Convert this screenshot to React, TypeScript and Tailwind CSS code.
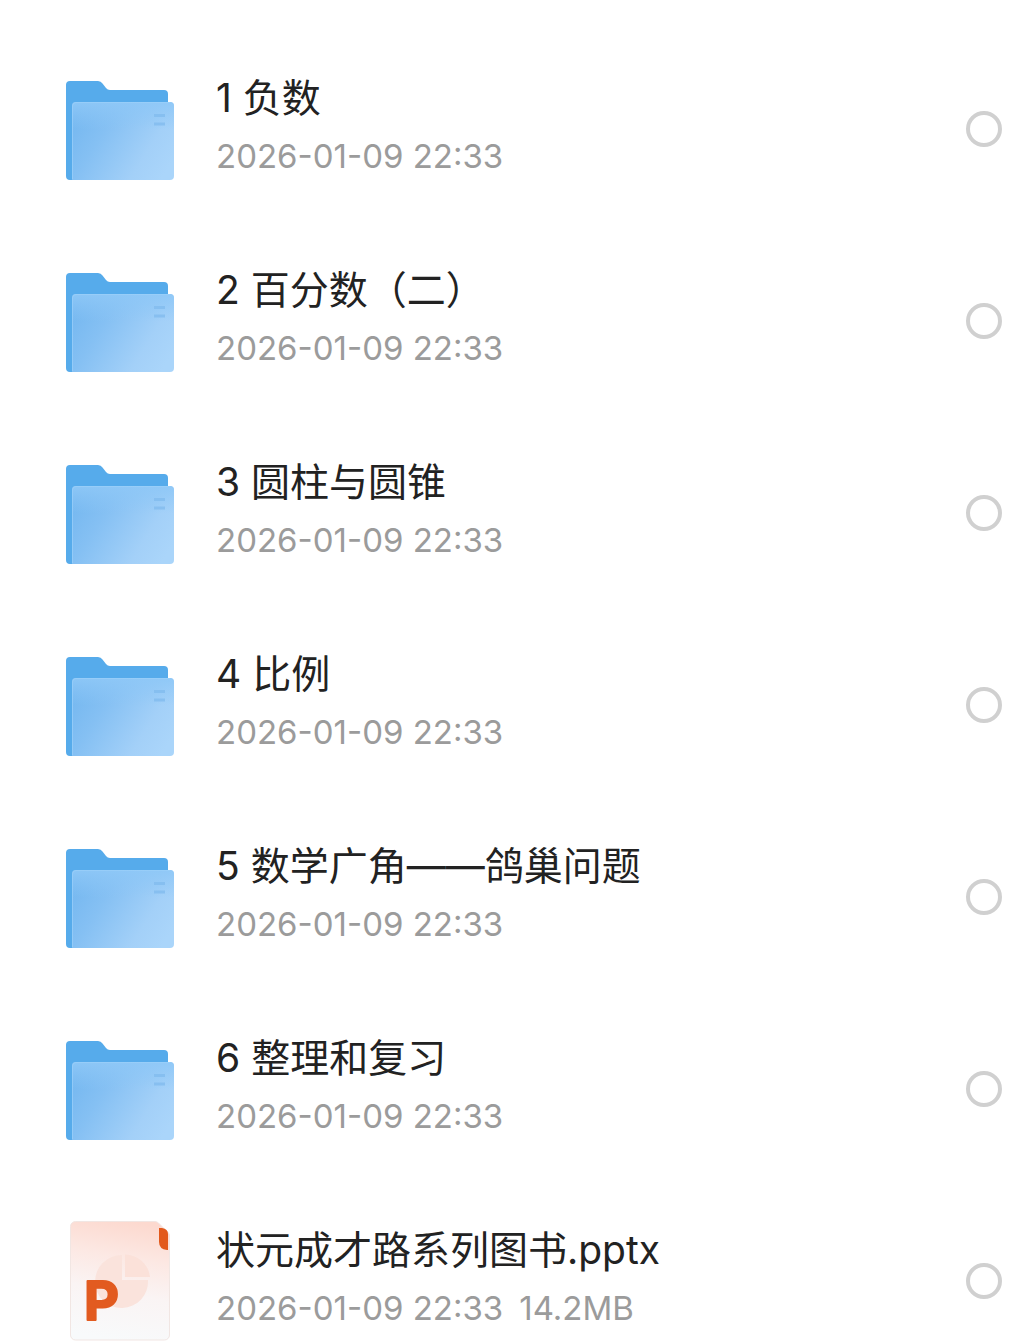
import React, { useState } from 'react';

interface FileItem {
  id: string;
  name: string;
  kind: 'folder' | 'pptx';
  date: string;
  size?: string;
}

const files: FileItem[] = [
  { id: 'f1', name: '1 负数', kind: 'folder', date: '2026-01-09 22:33' },
  { id: 'f2', name: '2 百分数（二）', kind: 'folder', date: '2026-01-09 22:33' },
  { id: 'f3', name: '3 圆柱与圆锥', kind: 'folder', date: '2026-01-09 22:33' },
  { id: 'f4', name: '4 比例', kind: 'folder', date: '2026-01-09 22:33' },
  { id: 'f5', name: '5 数学广角——鸽巢问题', kind: 'folder', date: '2026-01-09 22:33' },
  { id: 'f6', name: '6 整理和复习', kind: 'folder', date: '2026-01-09 22:33' },
  { id: 'f7', name: '状元成才路系列图书.pptx', kind: 'pptx', date: '2026-01-09 22:33', size: '14.2MB' },
];

function FolderIcon({ id }: { id: string }) {
  return (
    <svg viewBox="0 0 120 120" className="size-[120px] shrink-0" aria-hidden="true">
      <defs>
        <linearGradient id={`${id}-front`} gradientUnits="userSpaceOnUse" x1="14" y1="50" x2="104" y2="106">
          <stop offset="0" stopColor="#76b8f0" />
          <stop offset="0.3" stopColor="#85c0f3" />
          <stop offset="0.75" stopColor="#a3d0f8" />
          <stop offset="1" stopColor="#aad5fa" />
        </linearGradient>
        <linearGradient id={`${id}-shine`} x1="0" y1="0" x2="0" y2="1">
          <stop offset="0" stopColor="#8fc8f7" stopOpacity="0.9" />
          <stop offset="0.35" stopColor="#8fc8f7" stopOpacity="0" />
        </linearGradient>
      </defs>
      <path
        d="M6 16a4 4 0 0 1 4-4h28q3 0 4.500 2.500l3.500 4.500q1.500 2 4 2h54a4 4 0 0 1 4 4v20L18 111h-8a4 4 0 0 1-4-4z"
        fill="#56abeb"
      />
      <path d="M12 37a4 4 0 0 1 4-4h94a4 4 0 0 1 4 4v70a4 4 0 0 1-4 4H12z" fill={`url(#${id}-front)`} />
      <path d="M12 37a4 4 0 0 1 4-4h94a4 4 0 0 1 4 4v70a4 4 0 0 1-4 4H12z" fill={`url(#${id}-shine)`} />
      <path d="M12.500 110V37q0-3.500 3.500-3.500h94" fill="none" stroke="#9bd0f9" strokeOpacity="0.7" />
      <path d="M94 46.500h11M94 55h11" stroke="#82bbee" strokeWidth="3" strokeOpacity="0.8" />
    </svg>
  );
}

function PptxIcon({ id }: { id: string }) {
  return (
    <svg viewBox="0 0 120 120" className="size-[120px] shrink-0" aria-hidden="true">
      <defs>
        <linearGradient id={`${id}-page`} x1="0.600" y1="0" x2="0.450" y2="1">
          <stop offset="0" stopColor="#fcd9cf" />
          <stop offset="0.3" stopColor="#fce8e3" />
          <stop offset="0.6" stopColor="#faf4f4" />
          <stop offset="1" stopColor="#f8fafb" />
        </linearGradient>
      </defs>
      <path
        d="M15.500 .5H95q2 0 3.500 1.500l10 10q1 1 1 3v99a5 5 0 0 1-5 5h-89a5 5 0 0 1-5-5v-108.500a5 5 0 0 1 5-5z"
        fill={`url(#${id}-page)`}
        stroke="#f1e6e3"
      />
      <path d="M99 7h3q6 1 6 6v16h-1q-8-1-8-8z" fill="#e2591c" />
      {/* pie chart */}
      <path d="M62 34v25h26a26.500 26.500 0 1 1-26-25z" fill="#fae3dc" />
      <path d="M65 33.500A25 25 0 0 1 90 56H65z" fill="#fbe1d9" />
      <text
        x="24"
        y="99"
        fill="#e25b20"
        stroke="#e25b20"
        strokeWidth="2"
        strokeLinejoin="round"
        className="text-[54px] font-bold"
      >
        P
      </text>
    </svg>
  );
}

interface FileRowProps {
  file: FileItem;
  checked: boolean;
  onToggle: () => void;
}

function FileRow({ file, checked, onToggle }: FileRowProps) {
  return (
    <li>
      <label htmlFor={file.id} className="flex h-48 cursor-pointer items-center gap-9 pl-[60px] pr-2.5">
        {file.kind === 'folder' ? <FolderIcon id={file.id} /> : <PptxIcon id={file.id} />}
        <span className="flex min-w-0 flex-1 flex-col pb-1.5">
          <span className="truncate text-[39px] leading-[60px] text-[#222222]">{file.name}</span>
          <span className="flex gap-4 text-[33px] leading-[56px] text-[#9b9b9b]">
            <span>{file.date}</span>
            {file.size && <span>{file.size}</span>}
          </span>
        </span>
        <input
          id={file.id}
          type="checkbox"
          checked={checked}
          onChange={onToggle}
          className="size-9 shrink-0 cursor-pointer appearance-none rounded-full border-4 border-[#d0d0d0] bg-white checked:border-[#56abec] checked:bg-[#56abec]"
        />
      </label>
    </li>
  );
}

export default function App() {
  const [selected, setSelected] = useState<string[]>([]);

  const toggle = (id: string) => {
    setSelected((prev) => (prev.includes(id) ? prev.filter((item) => item !== id) : [...prev, id]));
  };

  return (
    <main className="h-screen overflow-x-hidden overflow-y-auto bg-white font-['Inter','Noto_Sans_CJK_SC',sans-serif] [scrollbar-width:none]">
      <ul className="pt-[33px]">
        {files.map((file) => (
          <FileRow
            key={file.id}
            file={file}
            checked={selected.includes(file.id)}
            onToggle={() => toggle(file.id)}
          />
        ))}
      </ul>
    </main>
  );
}
